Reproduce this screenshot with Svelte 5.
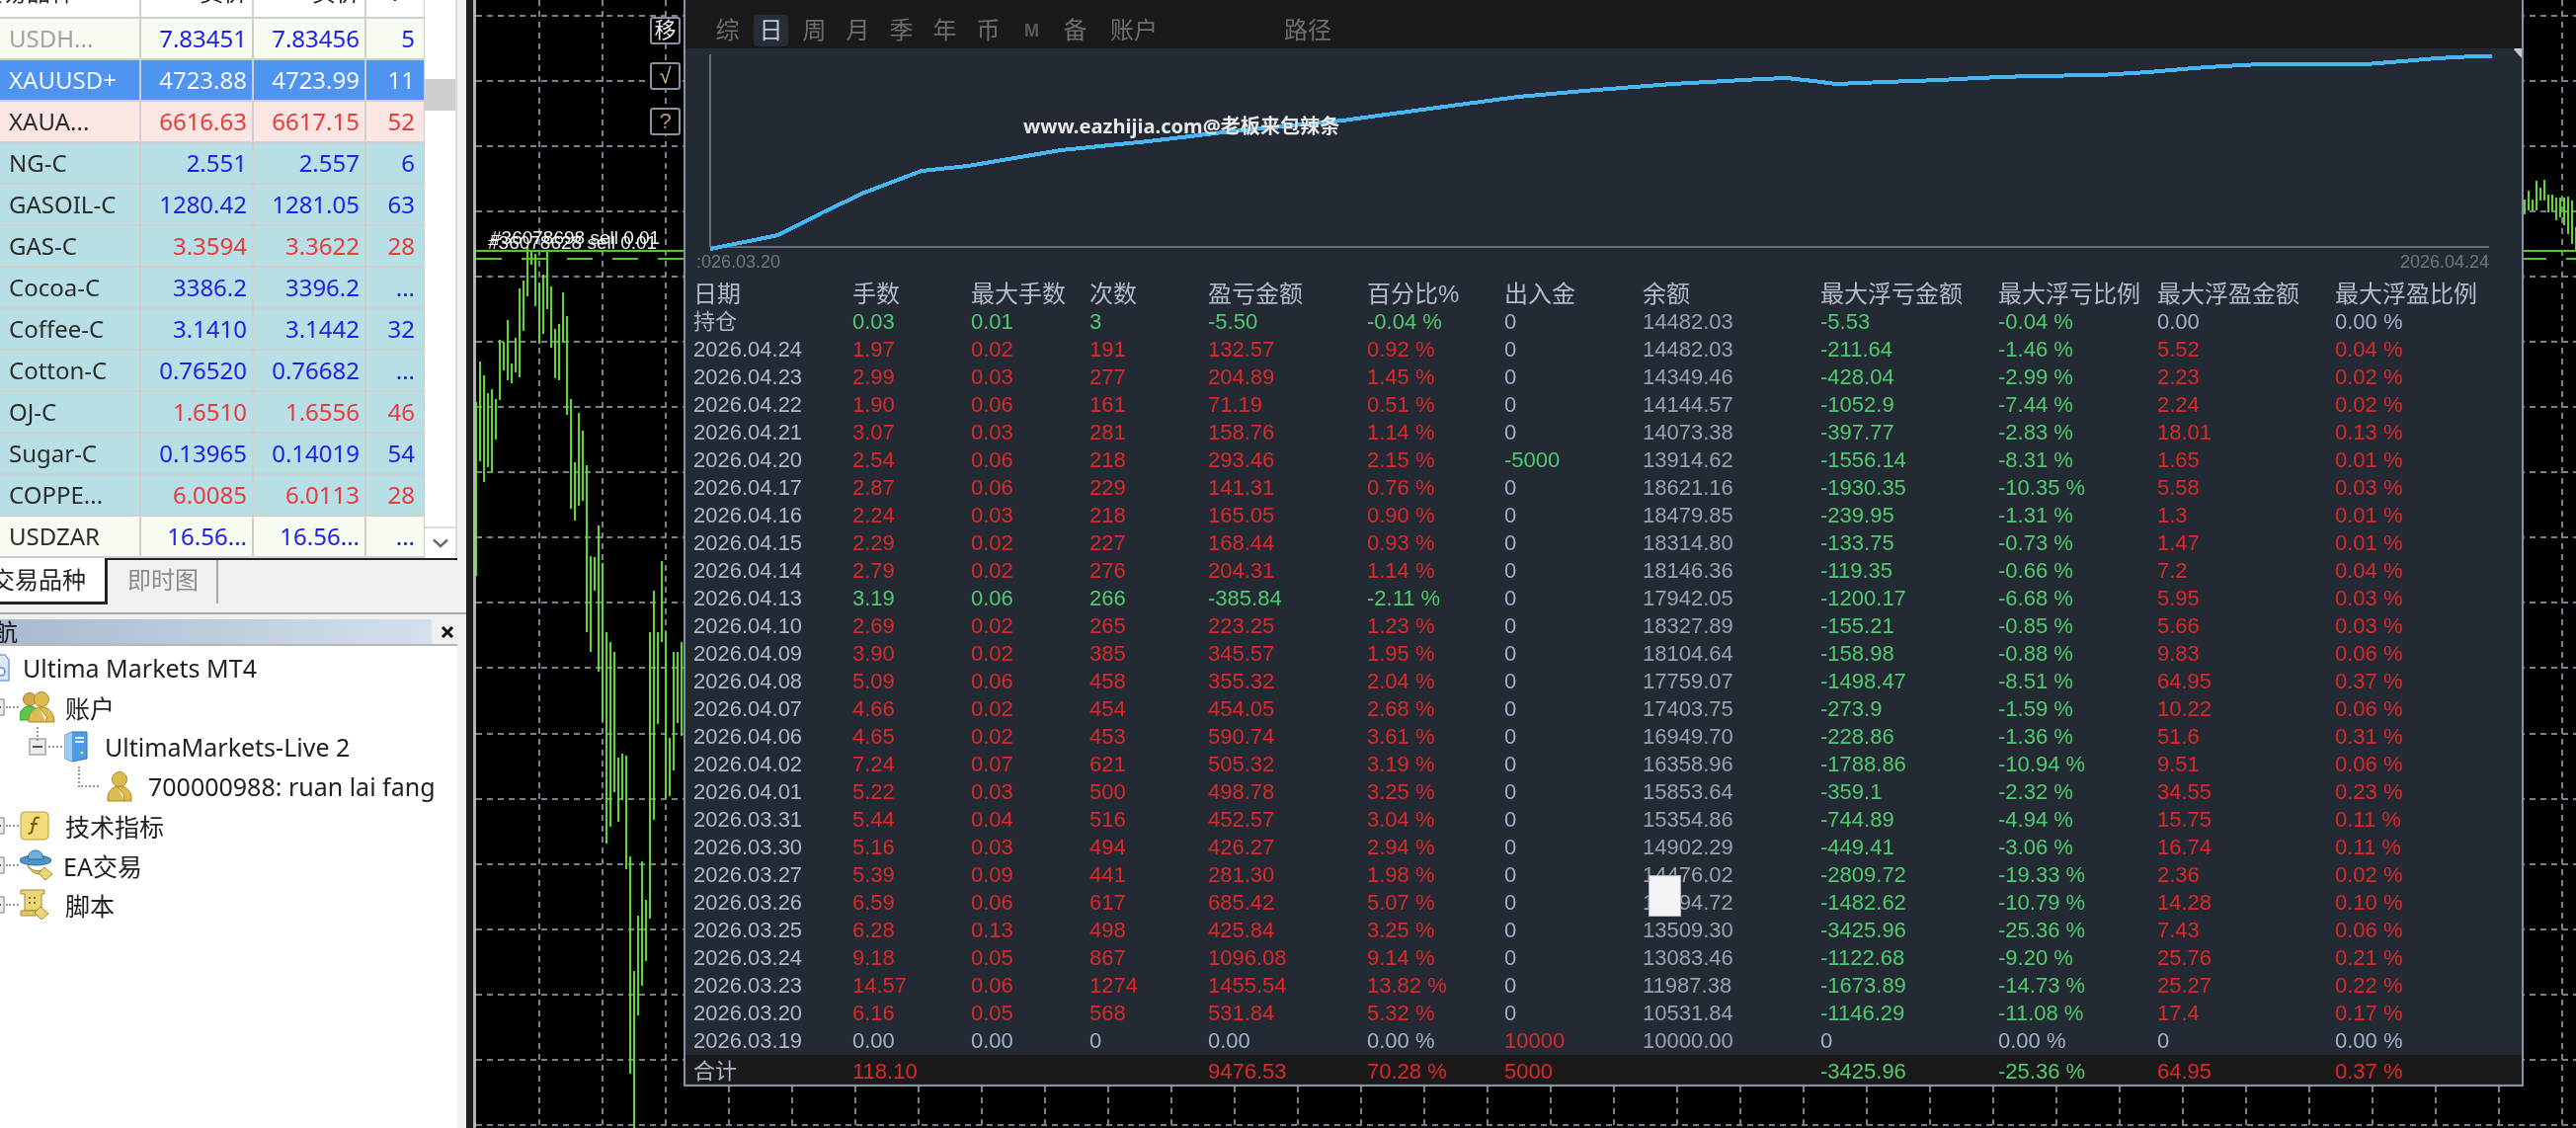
<script>
  const quotes = [
    { name: 'USDH...', bid: '7.83451', ask: '7.83456', sp: '5', row: 'pale', tone: 'blue', dim: true },
    { name: 'XAUUSD+', bid: '4723.88', ask: '4723.99', sp: '11', row: 'sel', tone: 'white' },
    { name: 'XAUA...', bid: '6616.63', ask: '6617.15', sp: '52', row: 'pink', tone: 'red' },
    { name: 'NG-C', bid: '2.551', ask: '2.557', sp: '6', row: 'cyan', tone: 'blue' },
    { name: 'GASOIL-C', bid: '1280.42', ask: '1281.05', sp: '63', row: 'cyan', tone: 'blue' },
    { name: 'GAS-C', bid: '3.3594', ask: '3.3622', sp: '28', row: 'cyan', tone: 'red' },
    { name: 'Cocoa-C', bid: '3386.2', ask: '3396.2', sp: '...', row: 'cyan', tone: 'blue' },
    { name: 'Coffee-C', bid: '3.1410', ask: '3.1442', sp: '32', row: 'cyan', tone: 'blue' },
    { name: 'Cotton-C', bid: '0.76520', ask: '0.76682', sp: '...', row: 'cyan', tone: 'blue' },
    { name: 'OJ-C', bid: '1.6510', ask: '1.6556', sp: '46', row: 'cyan', tone: 'red' },
    { name: 'Sugar-C', bid: '0.13965', ask: '0.14019', sp: '54', row: 'cyan', tone: 'blue' },
    { name: 'COPPE...', bid: '6.0085', ask: '6.0113', sp: '28', row: 'cyan', tone: 'red' },
    { name: 'USDZAR', bid: '16.56...', ask: '16.56...', sp: '...', row: 'pale', tone: 'blue' }
  ];

  const periods = ['综', '日', '周', '月', '季', '年', '币', 'M', '备'];
  const heads = ['日期', '手数', '最大手数', '次数', '盈亏金额', '百分比%', '出入金', '余额', '最大浮亏金额', '最大浮亏比例', '最大浮盈金额', '最大浮盈比例'];

  // date lots maxLots count pnl pct cash balance maxLoss lossPct maxProfit profitPct
  const raw = `持仓 0.03 0.01 3 -5.50 -0.04 0 14482.03 -5.53 -0.04 0.00 0.00
2026.04.24 1.97 0.02 191 132.57 0.92 0 14482.03 -211.64 -1.46 5.52 0.04
2026.04.23 2.99 0.03 277 204.89 1.45 0 14349.46 -428.04 -2.99 2.23 0.02
2026.04.22 1.90 0.06 161 71.19 0.51 0 14144.57 -1052.9 -7.44 2.24 0.02
2026.04.21 3.07 0.03 281 158.76 1.14 0 14073.38 -397.77 -2.83 18.01 0.13
2026.04.20 2.54 0.06 218 293.46 2.15 -5000 13914.62 -1556.14 -8.31 1.65 0.01
2026.04.17 2.87 0.06 229 141.31 0.76 0 18621.16 -1930.35 -10.35 5.58 0.03
2026.04.16 2.24 0.03 218 165.05 0.90 0 18479.85 -239.95 -1.31 1.3 0.01
2026.04.15 2.29 0.02 227 168.44 0.93 0 18314.80 -133.75 -0.73 1.47 0.01
2026.04.14 2.79 0.02 276 204.31 1.14 0 18146.36 -119.35 -0.66 7.2 0.04
2026.04.13 3.19 0.06 266 -385.84 -2.11 0 17942.05 -1200.17 -6.68 5.95 0.03
2026.04.10 2.69 0.02 265 223.25 1.23 0 18327.89 -155.21 -0.85 5.66 0.03
2026.04.09 3.90 0.02 385 345.57 1.95 0 18104.64 -158.98 -0.88 9.83 0.06
2026.04.08 5.09 0.06 458 355.32 2.04 0 17759.07 -1498.47 -8.51 64.95 0.37
2026.04.07 4.66 0.02 454 454.05 2.68 0 17403.75 -273.9 -1.59 10.22 0.06
2026.04.06 4.65 0.02 453 590.74 3.61 0 16949.70 -228.86 -1.36 51.6 0.31
2026.04.02 7.24 0.07 621 505.32 3.19 0 16358.96 -1788.86 -10.94 9.51 0.06
2026.04.01 5.22 0.03 500 498.78 3.25 0 15853.64 -359.1 -2.32 34.55 0.23
2026.03.31 5.44 0.04 516 452.57 3.04 0 15354.86 -744.89 -4.94 15.75 0.11
2026.03.30 5.16 0.03 494 426.27 2.94 0 14902.29 -449.41 -3.06 16.74 0.11
2026.03.27 5.39 0.09 441 281.30 1.98 0 14476.02 -2809.72 -19.33 2.36 0.02
2026.03.26 6.59 0.06 617 685.42 5.07 0 14194.72 -1482.62 -10.79 14.28 0.10
2026.03.25 6.28 0.13 498 425.84 3.25 0 13509.30 -3425.96 -25.36 7.43 0.06
2026.03.24 9.18 0.05 867 1096.08 9.14 0 13083.46 -1122.68 -9.20 25.76 0.21
2026.03.23 14.57 0.06 1274 1455.54 13.82 0 11987.38 -1673.89 -14.73 25.27 0.22
2026.03.20 6.16 0.05 568 531.84 5.32 0 10531.84 -1146.29 -11.08 17.4 0.17
2026.03.19 0.00 0.00 0 0.00 0.00 10000 10000.00 0 0.00 0 0.00`;

  const rows = raw.split('\n').map((l) => l.split(' '));
  const total = ['合计', '118.10', '', '', '9476.53', '70.28 %', '5000', '', '-3425.96', '-25.36 %', '64.95', '0.37 %'];

  function text(r, i) {
    return i === 5 || i === 9 || i === 11 ? r[i] + ' %' : r[i];
  }

  function tone(r, i) {
    if (i === 0) return 'date';
    if (i === 7) return 'bal';
    // lots and count take the colour of the day's result
    const v = i >= 1 && i <= 3 ? r[4] : r[i];
    if (parseFloat(v) === 0) return 'zero';
    return v.startsWith('-') ? 'green' : 'red';
  }

  const gridX = Array.from({ length: 33 }, (_, i) => 546 + i * 64);
  const gridY = [16, 82, 148, 214, 280, 346, 412, 478, 544, 610, 676, 743, 809, 875, 941, 1007, 1073, 1139];

  const bars = [
    [482, 407, 583], [486, 366, 467], [490, 380, 488], [494, 398, 473], [498, 394, 478], [502, 404, 445],
    [506, 344, 405], [510, 346, 375], [514, 324, 385], [518, 368, 388], [522, 342, 377], [526, 292, 382],
    [530, 284, 335], [534, 250, 300], [538, 255, 268], [542, 257, 310], [546, 287, 348], [550, 278, 338],
    [554, 253, 313], [558, 290, 352], [562, 333, 383], [566, 328, 385], [570, 296, 347], [574, 320, 420],
    [578, 404, 515], [582, 468, 527], [586, 418, 512], [590, 436, 507], [594, 471, 640], [598, 563, 660],
    [602, 564, 598], [606, 532, 680], [610, 570, 730], [614, 640, 854], [618, 650, 837], [622, 660, 802],
    [626, 767, 832], [630, 763, 810], [634, 765, 880], [638, 867, 1087], [642, 983, 1142], [646, 927, 1028],
    [650, 872, 998], [654, 911, 973], [658, 640, 930], [662, 598, 830], [666, 640, 733], [670, 568, 650],
    [674, 640, 808], [678, 747, 806], [682, 660, 780], [686, 660, 732], [690, 650, 745],
    [2556, 202, 217], [2560, 193, 213], [2564, 202, 213], [2568, 183, 213], [2572, 190, 203], [2576, 182, 203],
    [2580, 197, 215], [2584, 197, 213], [2588, 200, 223], [2592, 200, 220], [2596, 200, 228], [2600, 199, 237],
    [2604, 203, 247], [2608, 230, 253]
  ];

  const curve = [
    [719, 252], [788, 238], [833, 215], [875, 195], [933, 173], [980, 168], [1074, 152], [1163, 143], [1238, 134],
    [1359, 122], [1477, 106], [1537, 98], [1604, 92], [1693, 85], [1783, 80], [1809, 79], [1836, 82], [1859, 85],
    [1908, 83], [1964, 81], [2001, 79], [2054, 77], [2126, 76], [2175, 73], [2221, 69], [2251, 67], [2289, 65],
    [2395, 65], [2432, 62], [2467, 59], [2504, 57], [2523, 57]
  ].map((p) => p.join(',')).join(' ');
</script>

<div class="app">
  <aside class="side">
    <div class="watch">
      <div class="table">
        <div class="quote head">
          <span class="sym"><b>交易品种</b></span><span><b>卖价</b></span><span><b>买价</b></span><span><b>!</b></span>
        </div>
        {#each quotes as q}
          <div class="quote {q.row} {q.tone}">
            <span class="sym" class:dim={q.dim}>{q.name}</span>
            <span>{q.bid}</span>
            <span>{q.ask}</span>
            <span class="sp">{q.sp}</span>
          </div>
        {/each}
      </div>
      <div class="scroll">
        <div class="thumb"></div>
        <div class="down">
          <svg width="18" height="10" viewBox="0 0 18 10"><path d="M2 1.5 9 8l7-6.5" fill="none" stroke="#6a6a6a" stroke-width="2.4" /></svg>
        </div>
      </div>
    </div>

    <div class="tabs">
      <div class="tab on"><span>交易品种</span></div>
      <div class="tab">即时图</div>
    </div>

    <div class="nav">
      <div class="nav-head">
        <div class="title"><span>导航</span></div>
        <svg width="14" height="14" viewBox="0 0 14 14"><path d="M2 2l10 10M12 2 2 12" stroke="#111" stroke-width="3" /></svg>
      </div>
      <div class="tree">
        <div class="node">
          <svg class="root-ic" width="10" height="28" viewBox="0 0 10 28">
            <path d="M-8 1H5l4 5v21H-8z" fill="#dce8f8" stroke="#7ea6dc" stroke-width="1.6" />
            <circle cx="1" cy="18" r="4" fill="#fff" stroke="#5f8fd0" stroke-width="1.6" />
          </svg>
          <span class="lbl l0">Ultima Markets MT4</span>
        </div>
        <div class="node">
          <i class="exp cut"></i><i class="dots"></i>
          <svg class="ic" width="36" height="34" viewBox="0 0 36 34">
            <circle cx="10" cy="9" r="6.5" fill="#d6a94a" stroke="#a07a20" />
            <path d="M0 27c0-7 4-11 10-11s9 4 9 11v3H0z" fill="#5cc84a" stroke="#3b9a2e" />
            <circle cx="22" cy="9" r="7.5" fill="#dcbc50" stroke="#a88a28" />
            <path d="M9 32c-1-9 5-15 13-15s13 6 13 15z" fill="#dcbc50" stroke="#a88a28" />
            <path d="M20 18l8 9-2 5" fill="#f6ecc0" stroke="#a88a28" />
          </svg>
          <span class="lbl">账户</span>
        </div>
        <div class="node live">
          <i class="vdots a"></i><i class="exp"></i><i class="dots short"></i>
          <svg class="ic" width="24" height="32" viewBox="0 0 24 32">
            <path d="M1 4 8 1h15v27l-15 3-7-3z" fill="#4f9be8" stroke="#2f6fc0" />
            <path d="M8 1v30L1 28V4z" fill="#9ccbf5" />
            <path d="M11 7h9M11 11h9" stroke="#dcefff" stroke-width="2" />
            <circle cx="18" cy="22" r="1.6" fill="#f0d060" />
          </svg>
          <span class="lbl">UltimaMarkets-Live 2</span>
        </div>
        <div class="node acct">
          <i class="vdots b"></i><i class="dots long"></i>
          <svg class="ic" width="26" height="32" viewBox="0 0 26 32">
            <circle cx="13" cy="9" r="7.5" fill="#dcbc50" stroke="#a88a28" />
            <path d="M1 31c-1-9 4-15 12-15s13 6 12 15z" fill="#dcbc50" stroke="#a88a28" />
            <path d="M11 17l7 8-1 5" fill="#f6ecc0" stroke="#a88a28" />
          </svg>
          <span class="lbl">700000988: ruan lai fang</span>
        </div>
        <div class="node">
          <i class="exp cut"></i><i class="dots"></i>
          <svg class="ic" width="30" height="30" viewBox="0 0 30 30">
            <rect x="1" y="1" width="28" height="28" rx="4" fill="#f3dc7a" stroke="#b59a3c" />
            <path d="M20 7c-3-1-5 0-5.500 3l-2 10c-.5 2.500-2 3-4 2.500M11 13h7" fill="none" stroke="#7a5a10" stroke-width="2" />
          </svg>
          <span class="lbl wide-ic">技术指标</span>
        </div>
        <div class="node">
          <i class="exp cut"></i><i class="dots"></i>
          <svg class="ic" width="34" height="32" viewBox="0 0 34 32">
            <ellipse cx="16" cy="11" rx="16" ry="5" fill="#4f93c8" stroke="#2f6a9c" />
            <path d="M8 10c0-6 4-9 8-9s8 3 8 9z" fill="#6fb0de" stroke="#2f6a9c" />
            <path d="M8 16c3 5 10 7 15 5l-3 4c-5 0-9-3-12-9z" fill="#e8cc60" stroke="#a88a28" />
            <path d="M25 18l8 7-7 6-7-7z" fill="#ecd67a" stroke="#a88a28" />
          </svg>
          <span class="lbl">EA交易</span>
        </div>
        <div class="node">
          <i class="exp cut"></i><i class="dots"></i>
          <svg class="ic" width="30" height="32" viewBox="0 0 30 32">
            <path d="M1 1h24v4h-3v17H5V5H1z" fill="#ecd67a" stroke="#a88a28" />
            <path d="M1 22h15v5H1z" fill="#e3c75c" stroke="#a88a28" />
            <path d="M9 9h2M14 9h2M9 14h2M14 14h2" stroke="#8a7020" stroke-width="2" />
            <path d="M21 18l8 7-7 6-7-7z" fill="#ecd67a" stroke="#a88a28" />
          </svg>
          <span class="lbl wide-ic">脚本</span>
        </div>
      </div>
    </div>
  </aside>

  <main class="chart">
    <svg class="canvas" width="2126" height="1142" viewBox="482 0 2126 1142">
      {#each gridY as y}
        <line class="grid" x1="482" x2="2608" y1={y} y2={y} />
      {/each}
      {#each gridX as x}
        <line class="grid" x1={x} x2={x} y1="0" y2="1142" />
      {/each}
      {#each bars as b}
        <line class="bar" x1={b[0]} x2={b[0]} y1={b[1]} y2={b[2]} />
      {/each}
      <line class="order" x1="482" x2="2608" y1="254" y2="254" />
      <line class="order dash" x1="482" x2="2608" y1="262" y2="262" />
      <text class="tag" x="494" y="252">#36078628 sell 0.01</text>
      <text class="tag" x="497" y="247">#36078698 sell 0.01</text>
    </svg>

    <div class="tools">
      <div class="tool move">移</div>
      <div class="tool check">√</div>
      <div class="tool ask">?</div>
    </div>

    <section class="panel">
      <div class="periods">
        {#each periods as p, i}
          <span class="period" class:active={i === 1} class:latin={p === 'M'}>{p}</span>
        {/each}
        <span class="period wide">账户</span>
        <span class="period path">路径</span>
      </div>

      <svg class="equity" width="1859" height="235" viewBox="694 49 1859 235">
        <line class="axis" x1="719" x2="719" y1="55" y2="250" />
        <line class="axis" x1="719" x2="2520" y1="250" y2="250" />
        <polyline class="curve" points={curve} />
        <text class="mark" x="705" y="271">:026.03.20</text>
        <text class="mark" x="2430" y="271">2026.04.24</text>
        <text class="wm" x="1036" y="135">www.eazhijia.com@老板来包辣条</text>
        <path d="M2553 41v18l-8-9z" fill="#c9c9c9" />
      </svg>

      <div class="stats">
        <div class="line heads">
          {#each heads as h}<span>{h}</span>{/each}
        </div>
        {#each rows as r}
          <div class="line">
            {#each r as _, i}<span class={tone(r, i)}>{text(r, i)}</span>{/each}
          </div>
        {/each}
        <div class="line sum">
          {#each total as t, i}<span class={i === 0 ? 'date' : t.startsWith('-') ? 'green' : 'red'}>{t}</span>{/each}
        </div>
        <div class="blot"></div>
      </div>
    </section>
  </main>
</div>

<style>
  :global(body) {
    margin: 0;
    background: #000;
  }

  .app {
    display: flex;
    width: 2608px;
    height: 1142px;
    overflow: hidden;
    filter: blur(0.55px);
    font-family: "Noto Sans", "Noto Sans CJK SC", sans-serif;
  }

  .side {
    flex: none;
    width: 472px;
    height: 1142px;
    display: flex;
    flex-direction: column;
    background: #f0f0f0;
    border-right: 10px solid #1c1c1c;
    position: relative;
  }

  .side::after {
    content: "";
    position: absolute;
    top: 0;
    bottom: 0;
    right: -10px;
    width: 3px;
    background: #b4b4b4;
  }

  .watch {
    display: flex;
    width: 463px;
    height: 565px;
    background: #fff;
  }

  .table {
    width: 430px;
    background: #cfcfcf;
  }

  .quote {
    display: grid;
    grid-template-columns: 141px 112px 112px 58px;
    column-gap: 2px;
    height: 40px;
    margin-bottom: 2px;
    font-size: 24px;
    line-height: 40px;
    color: #2020e8;
  }

  .quote span {
    text-align: right;
    padding-right: 5px;
    white-space: nowrap;
    overflow: hidden;
  }

  .quote .sym {
    text-align: left;
    padding: 0 0 0 9px;
    color: #2c2c2c;
  }

  .quote .sp {
    padding-right: 9px;
  }

  .quote .sym.dim {
    color: #a3a3a3;
  }

  .quote.head {
    height: 17px;
    margin-bottom: 2px;
    line-height: 17px;
    color: #222;
  }

  .head span {
    background: #fff;
  }

  .head b {
    position: relative;
    top: -17px;
    font-weight: 400;
  }

  .head .sym b {
    left: -30px;
  }

  .head span:nth-child(4) {
    text-align: center;
    padding: 0;
  }

  .pale span {
    background: #f6fcf2;
  }

  .sel span {
    background: #4f94f0;
  }

  .pink span {
    background: #fbe6e3;
  }

  .cyan span {
    background: #b9dfe6;
  }

  .quote.red {
    color: #e63c3c;
  }

  .quote.white,
  .quote.white .sym {
    color: #f2f6fd;
  }

  .scroll {
    position: relative;
    flex: 1;
    border-right: 2px solid #dcdcdc;
  }

  .thumb {
    position: absolute;
    top: 80px;
    left: 0;
    right: 0;
    height: 32px;
    background: #cfcfcf;
  }

  .down {
    position: absolute;
    bottom: 0;
    left: 0;
    right: 0;
    height: 32px;
    display: flex;
    align-items: center;
    justify-content: center;
    border-top: 2px solid #dcdcdc;
    box-sizing: border-box;
  }

  .tabs {
    display: flex;
    height: 48px;
    width: 463px;
    box-sizing: border-box;
    border-top: 2px solid #222;
    font-size: 24px;
    color: #8a8a8a;
  }

  .tab {
    width: 112px;
    height: 44px;
    line-height: 40px;
    box-sizing: border-box;
    padding-left: 20px;
    border-right: 2px solid #aaa;
  }

  .tab.on {
    width: 109px;
    margin-top: -2px;
    height: 47px;
    padding-left: 0;
    background: #fff;
    color: #222;
    border-right: 3px solid #222;
    border-bottom: 3px solid #222;
    overflow: hidden;
    white-space: nowrap;
    line-height: 44px;
  }

  .tab.on span {
    margin-left: -9px;
  }

  .nav {
    flex: 1;
    display: flex;
    flex-direction: column;
    margin-top: 7px;
    border-top: 2px solid #a8a8a8;
  }

  .nav-head {
    display: flex;
    align-items: center;
    gap: 9px;
    height: 32px;
    padding-top: 5px;
    box-sizing: border-box;
    border-bottom: 2px solid #b8b8b8;
    width: 463px;
  }

  .title {
    width: 437px;
    height: 25px;
    background: linear-gradient(90deg, #a8bad0, #d4e0ec);
    font-size: 24px;
    line-height: 25px;
    color: #111;
    overflow: hidden;
    white-space: nowrap;
  }

  .title span {
    margin-left: -30px;
  }

  .tree {
    flex: 1;
    width: 463px;
    background: #fff;
    padding-top: 2px;
    box-sizing: border-box;
  }

  .node {
    position: relative;
    display: flex;
    align-items: center;
    height: 40px;
    font-size: 25px;
    color: #222;
    white-space: nowrap;
  }

  .lbl {
    margin-left: 10px;
  }

  .lbl.wide-ic {
    margin-left: 16px;
  }

  .lbl.l0 {
    margin-left: 13px;
  }

  .exp {
    flex: none;
    display: block;
    width: 18px;
    height: 18px;
    margin-left: 29px;
    box-sizing: border-box;
    border: 2px solid #b8b8b8;
    background: linear-gradient(#555, #555) center / 10px 2px no-repeat #ececec;
  }

  .exp.cut {
    margin-left: -13px;
    margin-right: 0;
  }

  .dots {
    flex: none;
    display: block;
    width: 13px;
    margin: 0 1px;
    border-top: 2px dotted #999;
  }

  .dots.short {
    width: 14px;
    margin: 0 2px;
  }

  .dots.long {
    width: 21px;
    margin: 0 8px 0 79px;
  }

  .vdots {
    position: absolute;
    display: block;
    height: 14px;
    border-left: 2px dotted #999;
  }

  .vdots.a {
    left: 37px;
    top: 0;
  }

  .vdots.b {
    left: 79px;
    top: 0;
    height: 21px;
  }

  .ic {
    flex: none;
  }

  .live .lbl {
    margin-left: 17px;
  }

  .acct .lbl {
    margin-left: 16px;
  }

  .root-ic {
    flex: none;
  }

  .chart {
    position: relative;
    flex: 1;
    height: 1142px;
    background: #000;
    overflow: hidden;
  }

  .canvas {
    display: block;
  }

  .grid {
    stroke: #78828f;
    stroke-width: 2;
    stroke-dasharray: 6 5;
  }

  .bar {
    stroke: #62d82e;
    stroke-width: 2;
  }

  .order {
    stroke: #52c82a;
    stroke-width: 2;
  }

  .order.dash {
    stroke-dasharray: 26 20;
  }

  .tag {
    fill: #f2f2f2;
    font: 19px "Liberation Sans", sans-serif;
  }

  .tools {
    position: absolute;
    top: 17px;
    left: 176px;
    display: flex;
    flex-direction: column;
    gap: 18px;
  }

  .tool {
    width: 31px;
    height: 28px;
    box-sizing: border-box;
    border: 2px solid #8a93a0;
    border-radius: 3px;
    background: #000;
    color: #eee;
    font: 22px/24px "Liberation Sans", "Noto Sans CJK SC", sans-serif;
    text-align: center;
  }

  .tool.check {
    color: #c9b98a;
  }

  .tool.ask {
    color: #b09a80;
  }

  .panel {
    position: absolute;
    top: 0;
    left: 210px;
    width: 1863px;
    height: 1100px;
    box-sizing: border-box;
    border: 2px solid #8693a5;
    border-top: 0;
    background: #232a33;
    font-family: "Liberation Sans", "Noto Sans CJK SC", sans-serif;
  }

  .periods {
    display: flex;
    align-items: flex-start;
    gap: 9px;
    height: 49px;
    padding: 15px 0 0 25px;
    box-sizing: border-box;
    background: #1a1a1a;
  }

  .period {
    flex: none;
    width: 35px;
    height: 32px;
    border-radius: 4px;
    text-align: center;
    font-size: 24px;
    line-height: 32px;
    color: #6e6e6e;
  }

  .period.active {
    background: #262d37;
    color: #c2cad6;
  }

  .period.latin {
    font-size: 18px;
    font-weight: 700;
    color: #5a5a5a;
  }

  .period.wide {
    width: 66px;
  }

  .period.path {
    width: 50px;
    margin-left: 109px;
  }

  .equity {
    display: block;
  }

  .axis {
    stroke: #6a6d72;
    stroke-width: 2;
  }

  .curve {
    fill: none;
    stroke: #48b6f0;
    stroke-width: 4;
    shape-rendering: crispEdges;
  }

  .mark {
    fill: #70777f;
    font-size: 18px;
  }

  .wm {
    fill: #e8e8e8;
    font: 700 20.1px "Noto Sans", "Noto Sans CJK SC", sans-serif;
  }

  .stats {
    position: relative;
  }

  .line {
    display: grid;
    grid-template-columns: 161px 120px 120px 120px 161px 139px 140px 180px 180px 161px 180px 180px;
    height: 28px;
    padding-left: 8px;
    font-size: 22px;
    line-height: 28px;
    white-space: nowrap;
  }

  .heads {
    font-size: 24px;
    color: #b4bcc9;
  }

  .sum {
    background: #1a1a1a;
    height: 29px;
    line-height: 33px;
    overflow: hidden;
  }

  .date {
    color: #aeb8c9;
  }

  .bal {
    color: #98a1ac;
  }

  .zero {
    color: #a2b0cc;
  }

  .red {
    color: #dc2828;
  }

  .green {
    color: #4ecb6c;
  }

  .blot {
    position: absolute;
    left: 975px;
    top: 602px;
    width: 33px;
    height: 42px;
    box-sizing: border-box;
    background: #f3f3f8;
    border: 1px solid #b4b4b8;
  }
</style>
